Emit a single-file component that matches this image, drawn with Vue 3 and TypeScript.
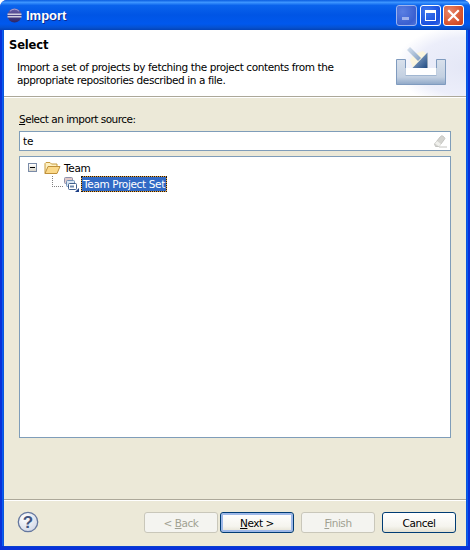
<template>
  <div class="window">
    <div class="titlebar">
      <svg class="app-icon" width="15" height="15" viewBox="0 0 15 15">
        <defs>
          <linearGradient id="sph" x1="0" y1="0" x2="0" y2="1">
            <stop offset="0" stop-color="#6a5fa8" />
            <stop offset="1" stop-color="#2c2566" />
          </linearGradient>
        </defs>
        <circle cx="7.5" cy="7.5" r="7" fill="url(#sph)" />
        <rect x="0.5" y="5.6" width="14" height="1.2" fill="#f2f0f6" />
        <rect x="0.5" y="8.2" width="14" height="1.2" fill="#f2f0f6" />
        <path d="M3 3.2a6 6 0 0 1 9 0" fill="none" stroke="#a79fd0" stroke-width="1" />
      </svg>
      <span class="title-text">Import</span>
      <div class="win-buttons">
        <button class="win-btn min"><span class="min-glyph"></span></button>
        <button class="win-btn max"><span class="max-glyph"></span></button>
        <button class="win-btn close">
          <svg width="13" height="13" viewBox="0 0 13 13">
            <path d="M2 2l9 9M11 2l-9 9" stroke="#fff" stroke-width="2.2" stroke-linecap="square" />
          </svg>
        </button>
      </div>
    </div>

    <div class="body">
      <header class="banner">
        <div class="banner-text">
          <h1>Select</h1>
          <p>Import a set of projects by fetching the project contents from the<br />appropriate repositories described in a file.</p>
        </div>
        <svg class="banner-icon" width="114" height="66" viewBox="0 0 114 66">
          <defs>
            <radialGradient id="arc" cx="1" cy="0.55" r="0.62">
              <stop offset="0" stop-color="#e4e7f6" />
              <stop offset="0.7" stop-color="#eceefa" />
              <stop offset="1" stop-color="#fff" />
            </radialGradient>
            <linearGradient id="tray" x1="0" y1="0" x2="0" y2="1">
              <stop offset="0" stop-color="#d9e1ec" />
              <stop offset="0.7" stop-color="#c3d0e1" />
              <stop offset="1" stop-color="#8fa8c8" />
            </linearGradient>
            <linearGradient id="shaft" x1="0" y1="0" x2="1" y2="1">
              <stop offset="0" stop-color="#d8e2ee" />
              <stop offset="1" stop-color="#7f9dc2" />
            </linearGradient>
            <linearGradient id="head" x1="0" y1="0" x2="1" y2="1">
              <stop offset="0" stop-color="#a9c0da" />
              <stop offset="1" stop-color="#1f4a82" />
            </linearGradient>
          </defs>
          <rect width="114" height="66" fill="url(#arc)" />
          <path d="M44.5 29.5h9v15.5h31v-15.5h9v25h-49z" fill="url(#tray)" stroke="#7f9bbf" stroke-width="1" />
          <path d="M53.5 38h31v7h-31z" fill="#fff" />
          <path d="M62 24l9-3 5 4v13h-15l-3-8z" fill="#fdf6d8" opacity=".85" />
          <path d="M55 20l3-3 11 11-3 3z" fill="url(#shaft)" />
          <path d="M75.5 22.5v15.5h-15z" fill="url(#head)" />
        </svg>
      </header>

      <main class="content">
        <label class="source-label"><u>S</u>elect an import source:</label>
        <div class="filter">
          <span>te</span>
          <svg width="14" height="14" viewBox="0 0 14 14">
            <path d="M1.5 10L7.5 2.5c.7-.8 1.4-.9 2.2-.4l1.6 1.2c.7.6.8 1.3.2 2L6 12.5H2.5z" fill="#d4d4d0" stroke="#c4c4c0" />
            <path d="M2 9.5l4 3L8 10 4 7z" fill="#f0f0ec" />
            <path d="M6 13h8" stroke="#c4c4c0" />
          </svg>
        </div>
        <div class="tree">
          <div class="tree-row">
            <span class="expander"><span></span></span>
            <svg class="folder" width="17" height="14" viewBox="0 0 17 14">
              <path d="M1 12.5V2.5L2 1.5h4l1.5 1.5H13v2" fill="#fdf0c2" stroke="#c79a3e" />
              <path d="M1 12.5L4 5.5h12l-3 7z" fill="#fbd98a" stroke="#c0913a" stroke-linejoin="round" />
            </svg>
            <span class="tree-label">Team</span>
          </div>
          <div class="tree-row child">
            <span class="elbow"></span>
            <svg class="set-icon" width="16" height="15" viewBox="0 0 16 15">
              <rect x="1.5" y="0.5" width="8" height="6" rx="1" fill="#e0c8c8" stroke="#8f93ac" />
              <rect x="3.5" y="3.5" width="8" height="6" rx="1" fill="#d8e6f4" stroke="#6f8fb6" />
              <rect x="5.5" y="6.5" width="8" height="6" rx="1" fill="#fff" stroke="#3f5f8d" />
              <rect x="7" y="8.5" width="4" height="2" fill="#6f8aae" />
              <path d="M16 11v4h-4z" fill="#1d3f86" />
            </svg>
            <span class="tree-label selected">Team Project Set</span>
          </div>
        </div>
      </main>

      <footer class="footer">
        <svg class="help" width="22" height="22" viewBox="0 0 22 22">
          <defs>
            <radialGradient id="help-bg" cx="0.35" cy="0.3" r="0.9">
              <stop offset="0" stop-color="#ffffff" />
              <stop offset="1" stop-color="#c9d0e2" />
            </radialGradient>
          </defs>
          <circle cx="11" cy="11" r="9.7" fill="url(#help-bg)" stroke="#64779e" stroke-width="1.3" />
          <text x="11" y="17" text-anchor="middle" class="help-mark">?</text>
        </svg>
        <div class="actions">
          <button class="btn" disabled>&lt; <u>B</u>ack</button>
          <button class="btn default"><u>N</u>ext &gt;</button>
          <button class="btn gap" disabled><u>F</u>inish</button>
          <button class="btn gap">Cancel</button>
        </div>
      </footer>
    </div>
  </div>
</template>

<script setup lang="ts">
</script>

<style>
html,
body {
  margin: 0;
  background: #fff;
}
</style>

<style scoped>
.window {
  width: 470px;
  height: 550px;
  display: flex;
  flex-direction: column;
  box-sizing: border-box;
  font-family: "DejaVu Sans", sans-serif;
  font-size: 11px;
  color: #000;
  background: #0831d9;
  border-radius: 7px 7px 0 0;
  overflow: hidden;
}

.titlebar {
  height: 30px;
  flex: none;
  display: flex;
  align-items: center;
  padding: 0 6px 0 7px;
  box-sizing: border-box;
  background: linear-gradient(180deg, #0a5de0 0%, #3d95ff 8%, #0a63ec 18%, #0055e5 50%, #0058ee 80%, #0551d0 92%, #0343b8 100%);
}

.app-icon {
  flex: none;
}

.title-text {
  margin-left: 4px;
  font-family: "Liberation Sans", sans-serif;
  font-size: 13px;
  font-weight: bold;
  color: #fff;
  text-shadow: 1px 1px 0 #0f2a8c;
}

.win-buttons {
  margin-left: auto;
  display: flex;
  gap: 2px;
}

.win-btn {
  width: 21px;
  height: 21px;
  padding: 0;
  border: 1px solid #fff;
  border-radius: 3px;
  display: flex;
  align-items: center;
  justify-content: center;
  box-sizing: border-box;
}

.win-btn.min {
  border-color: #9db3ee;
  background: radial-gradient(circle at 30% 30%, #5a7fe2, #3a5fd0 70%, #4f74dc);
  margin-right: 1px;
}

.min-glyph {
  width: 7px;
  height: 3px;
  margin-top: 7px;
  margin-right: 3px;
  background: #9fb2ec;
}

.win-btn.max {
  background: radial-gradient(circle at 30% 30%, #3f78ee, #1a50de 70%, #3f6fe8);
}

.max-glyph {
  width: 11px;
  height: 11px;
  box-sizing: border-box;
  border: 1px solid #fff;
  border-top-width: 3px;
}

.win-btn.close {
  background: radial-gradient(circle at 30% 30%, #e8866a, #d5502a 70%, #c64020);
}

.body {
  flex: 1;
  min-height: 0;
  margin: 0 4px 4px;
  background: #ece9d8;
  display: flex;
  flex-direction: column;
  box-shadow: -1px 0 0 #0855dd, 1px 0 0 #0855dd, -2px 0 0 #0a5cf0, 2px 0 0 #0a5cf0, 0 1px 0 #0840d0;
}

.banner {
  height: 66px;
  flex: none;
  display: flex;
  background: #fff;
}

.banner-text {
  flex: 1;
  padding: 7px 0 0 5px;
}

.banner-text h1 {
  margin: 0;
  font-size: 11.5px;
  font-weight: bold;
  letter-spacing: -0.15px;
  line-height: 16px;
}

.banner-text p {
  margin: 8px 0 0 8px;
  line-height: 13px;
  font-size: 10.5px;
  letter-spacing: -0.4px;
}

.banner-icon {
  flex: none;
  display: block;
}

.content {
  flex: 1;
  min-height: 0;
  display: flex;
  flex-direction: column;
  border-top: 1px solid #aca899;
  box-shadow: inset 0 1px 0 #fff;
  padding: 16px 15px 0;
}

.source-label {
  line-height: 13px;
  font-size: 10.5px;
  letter-spacing: -0.5px;
}

.filter {
  margin-top: 5px;
  height: 20px;
  box-sizing: border-box;
  border: 1px solid #7f9db9;
  background: #fff;
  display: flex;
  align-items: center;
  justify-content: space-between;
  padding: 0 3px;
  font-size: 10.5px;
}

.tree {
  margin-top: 5px;
  height: 282px;
  box-sizing: border-box;
  border: 1px solid #7f9db9;
  background: #fff;
  padding-top: 2px;
}

.tree-row {
  display: flex;
  align-items: center;
  height: 17px;
  padding-left: 8px;
  font-size: 10.5px;
  letter-spacing: -0.35px;
}

.expander {
  width: 9px;
  height: 9px;
  box-sizing: border-box;
  border: 1px solid #7a8ba8;
  background: linear-gradient(180deg, #fff, #d8d4c8);
  display: flex;
  align-items: center;
  justify-content: center;
}

.expander span {
  width: 5px;
  height: 1px;
  background: #000;
}

.folder {
  margin-left: 7px;
}

.tree-row > .tree-label {
  margin-left: 3px;
}

.tree-row.child {
  padding-left: 32px;
  align-items: flex-end;
  height: 16px;
}

.elbow {
  width: 11px;
  height: 11px;
  margin-bottom: 5px;
  box-sizing: border-box;
  border-left: 1px dotted #808080;
  border-bottom: 1px dotted #808080;
}

.set-icon {
  flex: none;
}

.tree-row > .tree-label.selected {
  margin-left: 2px;
  height: 16px;
  line-height: 14px;
  box-sizing: border-box;
  padding: 0 1px;
  background: linear-gradient(#316ac5, #316ac5) padding-box, #eea33a;
  color: #fff;
  border: 1px dotted #1a1a1a;
}

.footer {
  height: 47px;
  flex: none;
  display: flex;
  align-items: flex-start;
  border-top: 1px solid #aca899;
  box-shadow: inset 0 1px 0 #fff;
  padding: 12px 10px 0 13px;
  box-sizing: border-box;
}

.help {
  flex: none;
  margin-top: -1px;
}

.help-mark {
  font-family: "Liberation Sans", sans-serif;
  font-weight: bold;
  font-size: 17px;
  fill: #41557f;
}

.actions {
  margin-left: auto;
  display: flex;
  gap: 2px;
}

.btn {
  width: 74px;
  height: 21px;
  padding: 0;
  box-sizing: border-box;
  font-family: "DejaVu Sans", sans-serif;
  font-size: 10.5px;
  letter-spacing: -0.45px;
  color: #000;
  border: 1px solid #003c74;
  border-radius: 3px;
  background: linear-gradient(180deg, #fff 0%, #f5f4ee 70%, #e3e0d2 100%);
}

.btn.default {
  box-shadow: inset 0 0 0 2px #9db8e8;
}

.btn.gap {
  margin-left: 5px;
}

.btn:disabled {
  color: #a1a192;
  border-color: #c9c7ba;
  background: #f4f4f0;
}
</style>
